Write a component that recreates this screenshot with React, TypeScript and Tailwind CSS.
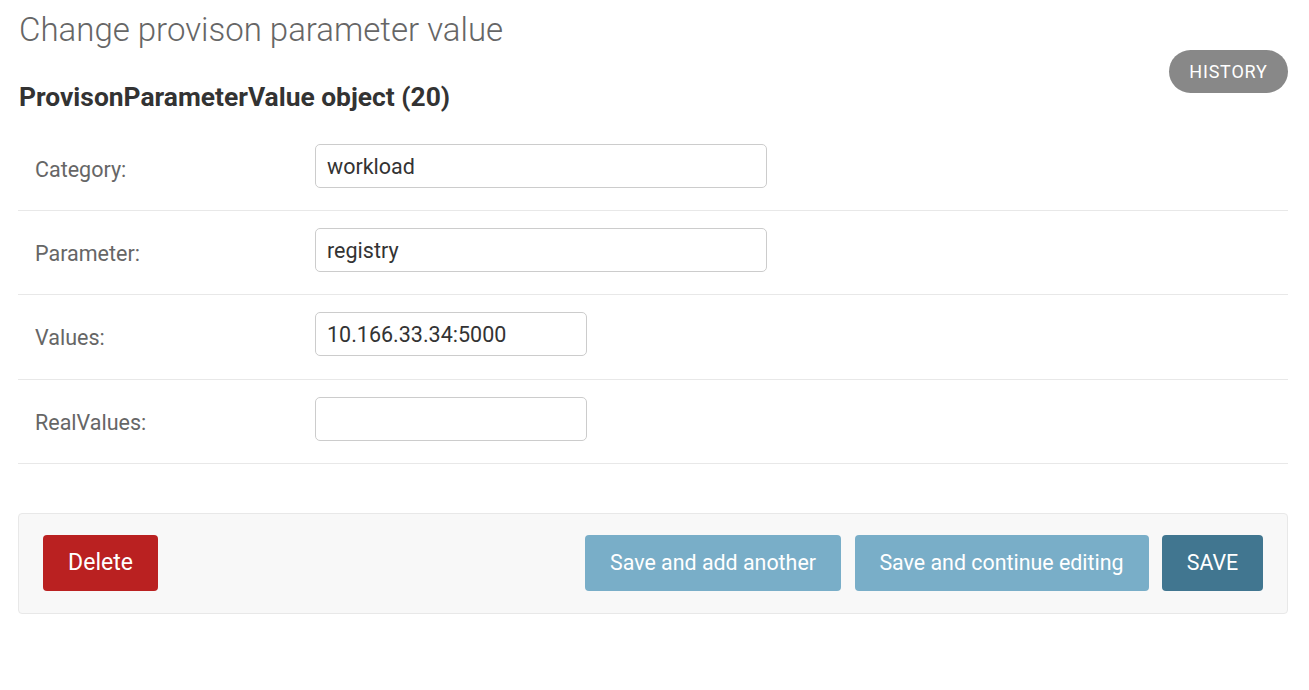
import React from "react";

const rows = [
  { label: "Category:", value: "workload", wide: true },
  { label: "Parameter:", value: "registry", wide: true },
  { label: "Values:", value: "10.166.33.34:5000", wide: false },
  { label: "RealValues:", value: "", wide: false },
];

export default function App() {
  return (
    <div className="min-h-[690px] bg-white pl-[18px] pr-[21px] font-['Roboto',_'Liberation_Sans',_sans-serif]">
      <h1 className="pt-[11px] pl-px text-[33px] font-light leading-[38px] text-[#666]">
        Change provison parameter value
      </h1>
      <div className="flex items-start justify-between">
        <h2 className="mt-[33px] pl-px text-[26.4px] font-bold leading-[30px] text-[#333]">
          ProvisonParameterValue object (20)
        </h2>
        <button className="mt-px h-[43px] w-[119px] rounded-full bg-[#888] text-[18px] font-normal uppercase tracking-[0.8px] text-white">
          History
        </button>
      </div>
      <div className="mt-[15px]">
        {rows.map((r) => (
          <div
            key={r.label}
            className="flex items-start border-b border-[#e8e8e8] pb-[22.2px] pt-[17px]"
          >
            <label className="w-[297px] pl-[17px] pt-[10px] text-[21.5px] leading-[32px] text-[#666]">
              {r.label}
            </label>
            <input
              readOnly
              value={r.value}
              className={`h-[44px] rounded-[5px] border border-[#ccc] px-[11px] text-[21.5px] text-[#333] outline-none ${
                r.wide ? "w-[452px]" : "w-[272px]"
              }`}
            />
          </div>
        ))}
      </div>
      <div className="mt-[49px] flex items-center rounded-[4px] border border-[#e8e8e8] bg-[#f8f8f8] px-[24px] py-[21.5px]">
        <button className="h-[56px] w-[115px] rounded-[4px] bg-[#ba2121] text-[23px] text-white">
          Delete
        </button>
        <div className="ml-auto flex items-center gap-[13.5px]">
          <button className="h-[56px] w-[256px] rounded-[4px] bg-[#79aec8] text-[21.4px] text-white">
            Save and add another
          </button>
          <button className="h-[56px] w-[294px] rounded-[4px] bg-[#79aec8] text-[21.4px] text-white">
            Save and continue editing
          </button>
          <button className="h-[56px] w-[101px] rounded-[4px] bg-[#417690] text-[21.4px] uppercase text-white">
            Save
          </button>
        </div>
      </div>
    </div>
  );
}
